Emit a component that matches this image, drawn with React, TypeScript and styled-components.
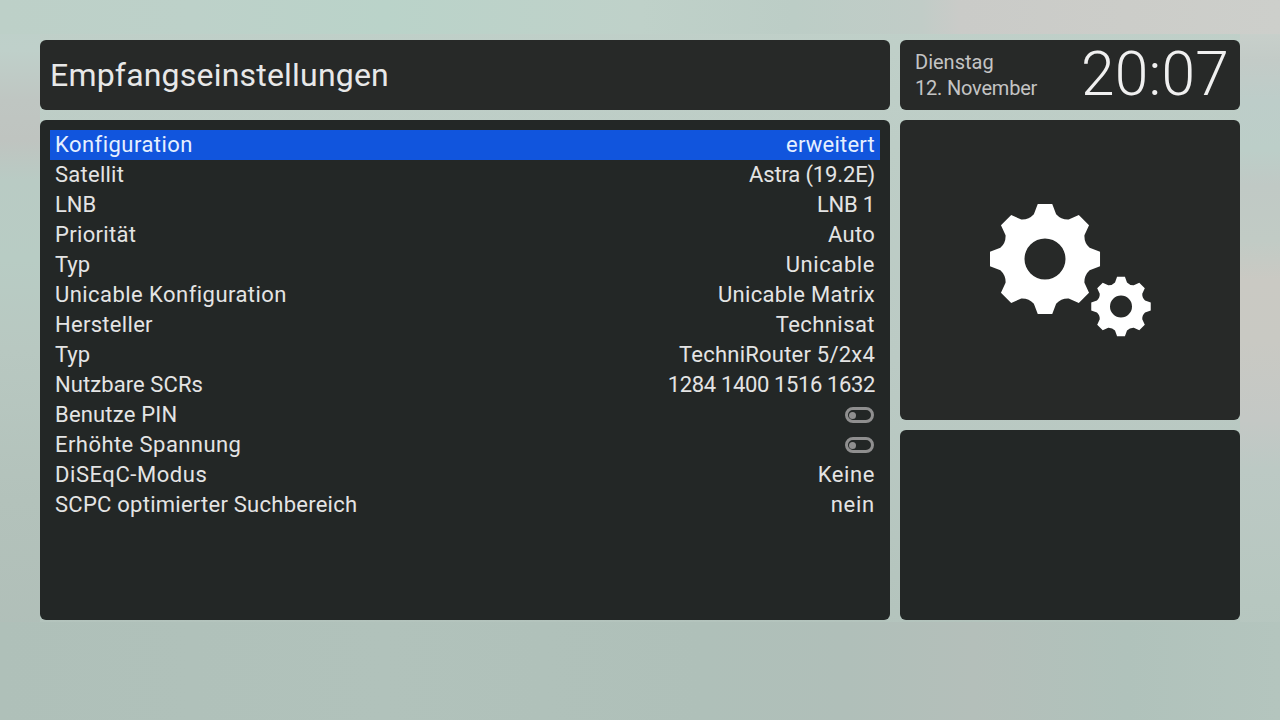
import React from "react";
import styled, { createGlobalStyle } from "styled-components";

const Global = createGlobalStyle`
  html, body { margin: 0; padding: 0; }
  body {
    font-family: Roboto, "Liberation Sans", sans-serif;
    background: #b8c9c2;
  }
`;

const Screen = styled.div`
  box-sizing: border-box;
  width: 1280px;
  height: 720px;
  overflow: hidden;
  padding: 40px;
  display: grid;
  grid-template-columns: 850px 340px;
  grid-template-rows: 70px 300px 190px;
  gap: 10px;
  background:
    linear-gradient(90deg, #bdd0c8 0, #bdd1c9 15%, #bad3c9 30%, #bfd1c9 50%, #bccdc6 62%, #c1ccc7 72%, #cacbc8 75%, #cccdc9 88%, #cdcfcb 100%) 0 0 / 100% 34px no-repeat,
    linear-gradient(90deg, #afc0b9 0, #b1c2bb 30%, #afc0b9 55%, #b0bfb9 66%, #b4bfba 76%, #b0c2bb 88%, #b4c5be 100%) 0 622px / 100% 98px no-repeat,
    linear-gradient(180deg, #cfd1cd 0, #c8d0cb 30px, #c3cbc7 60px, #bdcdc9 100px, #bccec8 150px, #c0c9c5 185px, #c1cbc5 240px, #cac9c3 280px, #c9c9c3 340px, #c4c8c5 420px, #bcc9c4 470px, #b7c7c0 600px, #b4c4be 720px) 100% 0 / 40px 100% no-repeat,
    linear-gradient(180deg, #bdd0c9 0, #bfd0ca 50px, #bfc6c2 100px, #bfc4c0 140px, #b9cbc4 180px, #b8ccc4 260px, #b8c8c1 350px, #b3c2bb 500px, #afbdb7 720px) 0 0 / 40px 100% no-repeat,
    linear-gradient(180deg, #c0d0c9 0%, #bdcdc6 20%, #bbcac4 50%, #b4c4bd 85%, #b0c1ba 100%);
`;

const Panel = styled.section`
  border-radius: 6px;
  background: #272928;
  min-width: 0;
`;

const ListPanel = styled(Panel)`
  grid-row: span 2;
  background: #232726;
  padding: 10px;
`;

const TitlePanel = styled(Panel)`
  display: flex;
  align-items: center;
  padding: 0 10px;
`;

const Title = styled.h1`
  margin: 0;
  font-size: 32px;
  font-weight: 400;
  color: #e8e8e8;
  letter-spacing: 0.2px;
`;

const ClockPanel = styled(Panel)`
  display: flex;
  align-items: center;
  justify-content: space-between;
  padding: 0 11px 0 15px;
`;

const DateBlock = styled.div`
  font-size: 20px;
  line-height: 26px;
  font-weight: 400;
  color: #c4c4c4;
`;

const DateLine = styled.div<{ $spacing: number }>`
  letter-spacing: ${(p) => p.$spacing}px;
`;

const Clock = styled.div`
  font-size: 60.5px;
  font-weight: 300;
  letter-spacing: 0.2px;
  color: #f0f0f0;
  line-height: 70px;
`;

const IconPanel = styled(Panel)`
  display: flex;
  align-items: center;
  justify-content: center;
`;

const EmptyPanel = styled(Panel)`
  background: #232726;
`;

const Row = styled.div<{ $selected?: boolean }>`
  box-sizing: border-box;
  height: 30px;
  padding: 0 5px 2px;
  display: flex;
  align-items: center;
  justify-content: space-between;
  font-size: 22px;
  color: ${(p) => (p.$selected ? "#e6f0ff" : "#e4e4e4")};
  background: ${(p) => (p.$selected ? "#1155dd" : "transparent")};
`;

const RowText = styled.span<{ $spacing: number }>`
  letter-spacing: ${(p) => p.$spacing}px;
`;

const Toggle = styled.span`
  box-sizing: border-box;
  width: 29px;
  height: 16px;
  margin: 2px 1px 0 0;
  border: 3px solid #8f8f8f;
  border-radius: 8px;
  display: flex;
  align-items: center;
  padding-left: 1px;
  &::before {
    content: "";
    width: 7px;
    height: 7px;
    border-radius: 50%;
    background: #8f8f8f;
  }
`;

const GearSvg = styled.svg`
  display: block;
  margin: 2px 0 0 1px;
`;

function gearPath(cx: number, cy: number, R: number, root: number, hole: number): string {
  const pt = (r: number, deg: number) => {
    const a = ((deg - 90) * Math.PI) / 180;
    return `${(cx + r * Math.cos(a)).toFixed(2)} ${(cy + r * Math.sin(a)).toFixed(2)}`;
  };
  let d = "";
  for (let i = 0; i < 8; i++) {
    const a = i * 45;
    d += `${i === 0 ? "M" : "L"}${pt(root, a - 14)} L${pt(R, a - 7.5)} L${pt(R, a + 7.5)} L${pt(root, a + 14)} `;
    d += `Q${pt(root * 0.92, a + 22.5)} ${pt(root, a + 31)} `;
  }
  d += `Z M${cx - hole} ${cy} a${hole} ${hole} 0 1 0 ${hole * 2} 0 a${hole} ${hole} 0 1 0 ${-hole * 2} 0 Z`;
  return d;
}

type RowData = { label: string; ls: number; value?: string; vs?: number };

const rows: RowData[] = [
  { label: "Konfiguration", ls: 0.46, value: "erweitert", vs: 0.22 },
  { label: "Satellit", ls: 0.25, value: "Astra (19.2E)", vs: -0.15 },
  { label: "LNB", ls: 0, value: "LNB 1", vs: -0.2 },
  { label: "Priorität", ls: 0.33, value: "Auto", vs: 0.25 },
  { label: "Typ", ls: 0, value: "Unicable", vs: 0.58 },
  { label: "Unicable Konfiguration", ls: 0.45, value: "Unicable Matrix", vs: 0.33 },
  { label: "Hersteller", ls: 0.3, value: "Technisat", vs: 0.44 },
  { label: "Typ", ls: 0, value: "TechniRouter 5/2x4", vs: 0.22 },
  { label: "Nutzbare SCRs", ls: 0.08, value: "1284 1400 1516 1632", vs: -0.37 },
  { label: "Benutze PIN", ls: 0.18 },
  { label: "Erhöhte Spannung", ls: 0.44 },
  { label: "DiSEqC-Modus", ls: 0.55, value: "Keine", vs: 0.6 },
  { label: "SCPC optimierter Suchbereich", ls: 0.25, value: "nein", vs: 0.75 },
];

export default function App() {
  return (
    <Screen>
      <Global />
      <TitlePanel>
        <Title>Empfangseinstellungen</Title>
      </TitlePanel>
      <ClockPanel>
        <DateBlock>
          <DateLine $spacing={0}>Dienstag</DateLine>
          <DateLine $spacing={-0.2}>12. November</DateLine>
        </DateBlock>
        <Clock>20:07</Clock>
      </ClockPanel>
      <ListPanel>
        {rows.map((r, i) => (
          <Row key={i} $selected={i === 0}>
            <RowText $spacing={r.ls}>{r.label}</RowText>
            {r.value ? <RowText $spacing={r.vs ?? 0}>{r.value}</RowText> : <Toggle />}
          </Row>
        ))}
      </ListPanel>
      <IconPanel>
        <GearSvg width="164" height="136" viewBox="0 0 164 136">
          <path fill="#ffffff" fillRule="evenodd" d={gearPath(56, 56, 55.5, 46, 20.5)} />
          <path fill="#ffffff" fillRule="evenodd" d={gearPath(132, 103.5, 30, 24.8, 11)} />
        </GearSvg>
      </IconPanel>
      <EmptyPanel />
    </Screen>
  );
}
